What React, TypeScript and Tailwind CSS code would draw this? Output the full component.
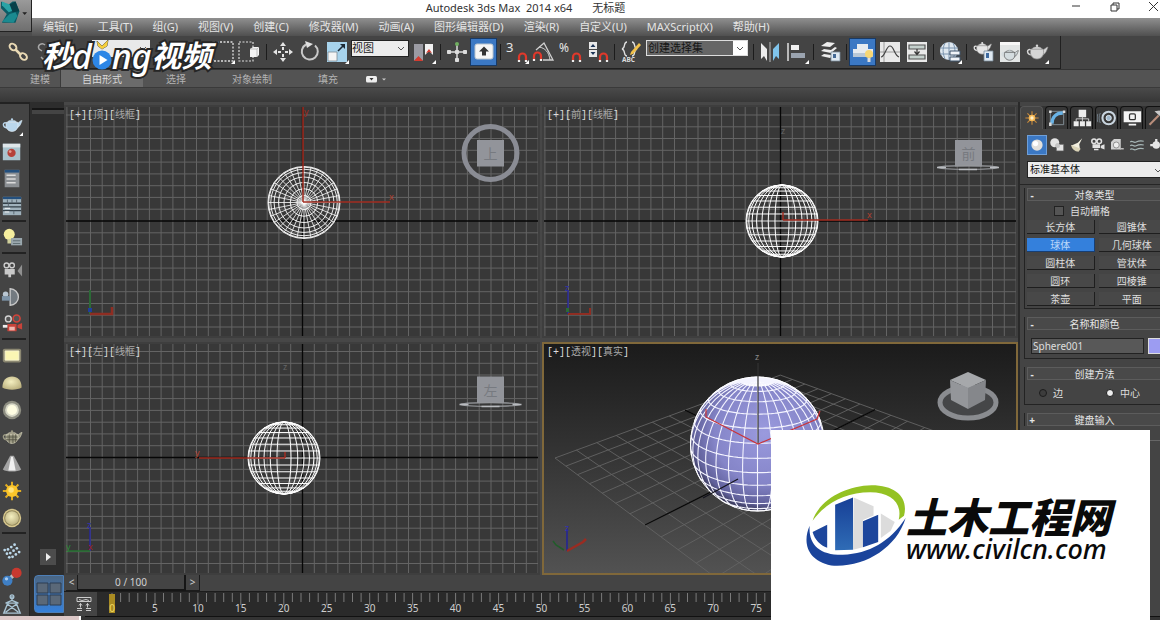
import React from "react";

const UI = "font-['Noto_Sans','Noto_Sans_CJK_SC',sans-serif]";

const magnet = (
  <path d="M14 21v-4a3.500 3.500 0 0 1 7 0v4" fill="none" stroke="#e0392b" strokeWidth="2.200" />
);
const magnetTips = <path d="M12.900 20h2.200v2h-2.200zM19.900 20h2.200v2h-2.200z" fill="#eee" />;
const corner = <path d="M24 20v4h-4z" fill="#fff" />;

const teapot = (fill: string, edge: string) => (
  <g>
    <path d="M17.500 10c3-1 3.500-3 5.500-3-1 2.500-2 7-5.500 8z" fill={fill} stroke={edge} strokeWidth=".6" />
    <path d="M6 10C1.500 8 1 14.500 7 15" fill="none" stroke={fill} strokeWidth="1.500" />
    <path d="M6 9h12c2 5-1 10-6 10S4 14 6 9z" fill={fill} stroke={edge} strokeWidth=".7" />
    <path d="M7 9c1-3 9-3 10 0z" fill={fill} stroke={edge} strokeWidth=".5" />
    <circle cx="12" cy="5.800" r="1.200" fill={fill} />
  </g>
);

const icons: Record<string, React.ReactNode> = {
  link: (
    <g fill="none" stroke="#e9d9b4" strokeWidth="2">
      <ellipse cx="7" cy="7" rx="3.800" ry="2.800" transform="rotate(40 7 7)" />
      <path d="M9 9l6 6" strokeWidth="2.500" />
      <ellipse cx="17.500" cy="16.500" rx="3.800" ry="2.800" transform="rotate(40 17.500 16.500)" />
    </g>
  ),
  unlink: (
    <g fill="none" stroke="#a8a8a8" strokeWidth="1.500">
      <path d="M12 5c-3-3-8 0-6 4l3 2" />
      <path d="M8 17l3 3M12 14l3 1" />
    </g>
  ),
  pick: <path d="M7 3v16l4-4 3 6 2-1-3-6h6z" fill="#ddd" />,
  list: <path d="M5 6h14M5 10h14M5 14h14M5 18h14" stroke="#ddd" strokeWidth="1.500" />,
  region: (
    <g>
      <path d="M2 2h20v19H2z" fill="none" stroke="#ddd" strokeWidth="1.300" strokeDasharray="2 1.500" />
      {corner}
    </g>
  ),
  crossing: (
    <g>
      <path d="M1 2h14v19H1z" fill="none" stroke="#ddd" strokeWidth="1.200" strokeDasharray="2 1.500" />
      <path d="M12 9l3-2h6v8l-2 2h-7z" fill="#f4f4f4" />
      <path d="M12 9h7v8M19 9l2-2" fill="none" stroke="#aaa" strokeWidth=".7" />
    </g>
  ),
  move: (
    <g fill="#e4e4e4">
      <path d="M12 2l3 4H9zM12 22l3-4H9zM2 12l4-3v6zM22 12l-4-3v6z" />
      <path d="M11 7h2v3h-2zM11 14h2v3h-2zM7 11h3v2H7zM14 11h3v2h-3z" />
    </g>
  ),
  rotate: (
    <g>
      <path d="M17 5.500A8 8 0 1 1 8 4.500" fill="none" stroke="#c9c9c9" strokeWidth="2" />
      <path d="M7 1l8 3-6 4z" fill="#e0e0e0" />
    </g>
  ),
  scale: (
    <g>
      <path d="M2 2h20v20H2z" fill="#a7d3ec" />
      <path d="M3 12h9v9H3z" fill="#f4f4f4" stroke="#7c8a94" strokeWidth=".8" />
      <path d="M13 11l5-5" stroke="#1b2a36" strokeWidth="1.600" />
      <path d="M15 4h5v5z" fill="#1b2a36" />
      {corner}
    </g>
  ),
  pivot: (
    <g>
      <path d="M2 4h9v17l-4.500-4L2 21z" fill="#9b9ba3" />
      <path d="M2 21l4.500-5 4.500 5z" fill="#d63b2f" />
      <path d="M13 4h8v11l-4-4-4 4z" fill="#f2f2f2" />
      <path d="M14 13l3-4 3 4-3-1z" fill="#d63b2f" />
      {corner}
    </g>
  ),
  manip: (
    <g stroke="#ddd" fill="#ddd">
      <path d="M12 5v15M4 12h16" strokeWidth="1.500" />
      <path d="M10.500 10.500h3v3h-3zM10.500 18.500h3v3h-3zM2.500 10.500h3v3h-3zM18.500 10.500h3v3h-3z" />
      <circle cx="12" cy="4" r="2" fill="#6fae5f" stroke="none" />
    </g>
  ),
  keyboard: (
    <g>
      <rect x="3" y="4" width="18" height="15" rx="2" fill="#f5f5f5" stroke="#b9c4ce" />
      <path d="M12 6.500l5 5h-3v4h-4v-4H7z" fill="#333" />
    </g>
  ),
  snap: (
    <g>
      <text x="1" y="12" fontSize="13" fill="#e6e6e6" fontFamily="Noto Sans">3</text>
      {magnet}
      {magnetTips}
      {corner}
    </g>
  ),
  angle: (
    <g>
      <path d="M4 10L12 3l9 17H11" fill="none" stroke="#d0d0d0" strokeWidth="1.300" />
      <path d="M7 7c6 1 10 5 11 13" fill="none" stroke="#d0d0d0" />
      <g transform="translate(-12 -1)">{magnet}{magnetTips}</g>
    </g>
  ),
  percent: (
    <g>
      <text x="0" y="12" fontSize="12" fill="#e6e6e6" fontFamily="Noto Sans">%</text>
      {magnet}
      {magnetTips}
    </g>
  ),
  spinner: (
    <g>
      <path d="M3 2h8v7H3zM3 10h8v7H3z" fill="#e8e8e8" />
      <path d="M7 4l2.500 3h-5zM7 15l2.500-3h-5z" fill="#1d3557" />
      {magnet}
      {magnetTips}
    </g>
  ),
  named: (
    <g>
      <path d="M8 2C4 2 7 8 3 9c4 1 1 7 5 7M13 2c4 0 1 6 5 7-4 1-1 7-5 7" fill="none" stroke="#e0e0e0" strokeWidth="1.300" />
      <path d="M20 3l2 2-8 9-3 1 1-3z" fill="#f2c14a" />
      <text x="3" y="22" fontSize="6.500" fontWeight="700" fill="#ddd" fontFamily="Noto Sans">ABC</text>
    </g>
  ),
  mirror: (
    <g>
      <path d="M3 3l6 6v12l-3-5-3 3z" fill="#ececec" />
      <path d="M12 2v20" stroke="#bbb" />
      <path d="M21 3l-6 6v12l3-5 3 3z" fill="#7fc4ec" />
    </g>
  ),
  align: (
    <g>
      <path d="M3 3v18" stroke="#e0e0e0" strokeWidth="1.500" />
      <path d="M6 5h8v5H6z" fill="#f0f0f0" />
      <path d="M6 13h14v5H6z" fill="#9ba4b0" />
      {corner}
    </g>
  ),
  layers: (
    <g>
      <path d="M3 6l6-4 8 1-5 4zM3 11l3-2 7 1 4-3 2 1-6 5zM3 16l3-2 7 1 4-3 1 1-6 5z" fill="#eee" />
      <path d="M13 12h9v9h-9z" fill="#dfe9f2" stroke="#7a8a99" strokeWidth=".8" />
      <path d="M15 14h3v4h-3z" fill="#456a96" />
    </g>
  ),
  ribbon: (
    <g>
      <path d="M2 9h20v8H2zM6 4h11v5H6z" fill="#e6ebf0" />
      <path d="M2 13h20v4H2z" fill="#b9c8d6" />
      <circle cx="18" cy="14" r="4" fill="#f7d774" />
      <path d="M16.500 18h3v4h-3z" fill="#ddd" />
    </g>
  ),
  curve: (
    <g>
      <path d="M2 2h20v20H2z" fill="#e9e9e9" />
      <path d="M2 12h20M6 2v20" stroke="#888" strokeWidth=".8" />
      <path d="M3 17c4 0 5-11 9-11s4 9 9 11" fill="none" stroke="#444" strokeWidth="1.200" />
    </g>
  ),
  schematic: (
    <g>
      <path d="M2 2h20v20H2z" fill="#e9e9e9" />
      <path d="M4 5h16v4H4zM4 15h16v4H4z" fill="#c4d0cc" stroke="#555" strokeWidth="1.200" />
      <path d="M12 9v5M9.500 11.500l2.500 3 2.500-3" fill="none" stroke="#333" strokeWidth="1.200" />
    </g>
  ),
  material: (
    <g>
      <circle cx="11" cy="11" r="9" fill="#dfe8f0" />
      <path d="M2 8h18M2 14h18M7 3c-3 6-2 11 0 16M15 3c3 6 2 11 0 16M11 2v18" fill="none" stroke="#7a93ad" />
      <path d="M12 11h10v4H12zM12 17h10v4H12z" fill="#f0f4f8" stroke="#3e556c" />
      {corner}
    </g>
  ),
  renderSetup: (
    <g>
      <g transform="translate(1 -2) scale(.85)">{teapot("#e6e6e6", "#888")}</g>
      <path d="M13 11h9v10h-9z" fill="#dfe9f2" stroke="#7a8a99" strokeWidth=".8" />
      <path d="M15 13h3v5h-3z" fill="#3e6aa0" />
    </g>
  ),
  renderFrame: (
    <g>
      <path d="M2 2h20v20H2z" fill="#e2e5e5" />
      <path d="M2 2h20v3H2z" fill="#f8f8f8" />
      <g transform="translate(2 5) scale(.8)">{teapot("#d4dcdf", "#333")}</g>
    </g>
  ),
  render: (
    <g>
      {teapot("#d6d6d6", "#8b8b8b")}
      {corner}
    </g>
  ),
  teapotBlue: (
    <g>
      {teapot("#b9d6ec", "#e4f0f8")}
      {corner}
    </g>
  ),
  preview: (
    <g>
      <path d="M2 3h19v18H2z" fill="#a9c3cd" />
      <path d="M2 3h19v4H2z" fill="#dfe6ea" />
      <circle cx="11.500" cy="13" r="4.500" fill="#b5423a" />
      <circle cx="10" cy="11.500" r="1.500" fill="#e39a90" />
    </g>
  ),
  script: (
    <g>
      <path d="M4 2h16v19H4z" fill="#8b8f93" />
      <path d="M4 2h16v3H4z" fill="#24507e" />
      <path d="M6 8h10M6 12h10M6 16h10" stroke="#dcdcdc" strokeWidth="1.600" />
    </g>
  ),
  table: (
    <g>
      <path d="M2 2h20v20H2z" fill="#9fb1bb" />
      <path d="M2 2h20v2.500H2z" fill="#24507e" />
      <path d="M2 9h20M2 13h20M2 17h20" stroke="#333f47" strokeWidth="1.500" />
      <path d="M7 5v4M12 5v4M17 5v4M8 9v4M14 17v4" stroke="#56646d" />
      <path d="M4 14.500h6M4 18.500h5" stroke="#fff" />
    </g>
  ),
  bulb: (
    <g>
      <circle cx="9" cy="8" r="6" fill="#f5ee9e" />
      <path d="M7 13h4v5H7z" fill="#cfcf9c" />
      <path d="M11 12h12v8H11z" fill="#9aa7ad" />
      <path d="M13 15h8M13 18h8" stroke="#5d6a70" />
    </g>
  ),
  camera: (
    <g fill="#c9c9c9">
      <circle cx="6" cy="7" r="2.600" fill="none" stroke="#ccc" strokeWidth="1.500" />
      <circle cx="12" cy="7" r="2.600" fill="none" stroke="#ccc" strokeWidth="1.500" />
      <path d="M4 11h11v6H4zM8 17h3v3H8z" />
      <path d="M23 6v13l-5-6z" fill="#909090" />
    </g>
  ),
  dome: (
    <g>
      <path d="M10 3a9 9 0 0 1 0 18z" fill="#737a80" stroke="#c9c9c9" strokeWidth="1.500" />
      <circle cx="5" cy="9" r="3" fill="#b9c6d2" />
      <path d="M1 11h9v5H1z" fill="#7d93a7" />
    </g>
  ),
  cameraRed: (
    <g>
      <circle cx="8" cy="6.500" r="3.200" fill="#555" stroke="#d3d3d3" strokeWidth="1.500" />
      <circle cx="17" cy="6" r="3.800" fill="#555" stroke="#d0443a" strokeWidth="1.800" />
      <path d="M7 12h10v8H7zM18 13l5-2v7l-5-2z" fill="#c8433a" />
      <path d="M2 13h5v3H2z" fill="#eee" />
      <path d="M9 15h6v4H9z" fill="#efb7b0" />
    </g>
  ),
  rectLight: (
    <g>
      <rect x="2" y="4" width="20" height="15" rx="2" fill="#8c8872" />
      <path d="M4.500 6.500h15v10h-15z" fill="#fbf6b4" stroke="#f8f4d0" />
    </g>
  ),
  domeLight: <path d="M1.500 17C1.500 9 6 5 12 5s10.500 4 10.500 12c-4 3-17 3-21 0z" fill="url(#cream)" />,
  ringLight: (
    <g>
      <circle cx="12" cy="12" r="10" fill="#8e8e82" />
      <circle cx="12" cy="12" r="7.500" fill="#d9d9c8" />
      <circle cx="12" cy="12" r="5.500" fill="#fffde2" />
    </g>
  ),
  teapotOlive: (
    <g>
      {teapot("#9b9983", "#e4e1c8")}
      <path d="M9 9v10M13 9v10M16 9v9M5 12h13M5 15h13" stroke="#4c4a3c" strokeWidth=".8" />
    </g>
  ),
  cone: (
    <g>
      <path d="M10 3h4l8 15c-4 3-16 3-20 0z" fill="#a4a4a4" />
      <path d="M11 4h2l3 15H8z" fill="#f1f1f1" />
    </g>
  ),
  sun: (
    <g>
      <path d="M12 2v20M2 12h20M5 5l14 14M19 5L5 19" stroke="#e2ad23" strokeWidth="2.200" />
      <circle cx="12" cy="12" r="6.500" fill="#fbc52a" />
      <circle cx="11" cy="11" r="3" fill="#ffe27a" />
    </g>
  ),
  sphereLight: (
    <g>
      <circle cx="12" cy="12" r="10" fill="#d8c88e" />
      <circle cx="12" cy="12" r="8.500" fill="#8f855a" />
      <circle cx="12" cy="12" r="7.500" fill="url(#cream)" />
    </g>
  ),
  scatter: (
    <g fill="#bcd8ea">
      {[0, 1, 2].map((r) =>
        [0, 1, 2, 3].map((c) => (
          <circle key={`${r}-${c}`} cx={4 + c * 3.600 + r * 2.500} cy={14 - c * 2.600 + r * 4 - (c === 0 ? 2 : 0)} r="1.500" />
        ))
      )}
    </g>
  ),
  atoms: (
    <g>
      <path d="M8 15l8-7" stroke="#bbb" strokeWidth="4" />
      <circle cx="7" cy="16" r="5.500" fill="#3f7fc4" />
      <circle cx="17" cy="7.500" r="5.500" fill="#c8392f" />
      <circle cx="6" cy="14" r="1.800" fill="#a9cdf0" />
    </g>
  ),
  rig: (
    <g fill="none" stroke="#a9c4d4" strokeWidth="1.500">
      <path d="M12 3v5l-7 3h14l-7-3M7 12L3 22h18l-4-10M7 12l12 9M17 12L5 21" />
      <circle cx="12" cy="4" r="2" />
    </g>
  ),
  create: (
    <g>
      <path d="M12 4v16M4 12h16M6.500 6.500l11 11M17.500 6.500l-11 11" stroke="#c98a3a" strokeWidth="1.300" />
      <circle cx="12" cy="12" r="4" fill="#f7b955" />
      <circle cx="12" cy="12" r="2" fill="#fff1c9" />
    </g>
  ),
  modify: (
    <g>
      <path d="M4 4h16v16H4z" fill="none" stroke="#8d9aa4" />
      <path d="M6 19C6 11 11 6 19 6" fill="none" stroke="#69b3e6" strokeWidth="4" />
      <path d="M2.500 17.500h3v4h-3zM2.500 3h3v3h-3zM19 3h3v3h-3z" fill="#ddd" />
    </g>
  ),
  hierarchy: (
    <g fill="#ececec">
      <path d="M8 2h9v9H8zM2 16h6v6H2zM9.500 16h6v6h-6zM17 16h6v6h-6z" />
      <path d="M12.500 10v6M5 16v-3h15v3" fill="none" stroke="#ddd" />
    </g>
  ),
  motion: (
    <g fill="none">
      <circle cx="14" cy="12" r="7.500" stroke="#c9d5df" strokeWidth="2.500" />
      <circle cx="14" cy="12" r="3.200" fill="#9fb7cb" stroke="#e5eef5" />
      <path d="M4 6c-2 4-2 8 0 12M1 7c-1 4-1 6 0 10" stroke="#7b8a96" />
    </g>
  ),
  display: (
    <g>
      <path d="M2 4h21v13H2zM8 19h9v2H8z" fill="#f4f4f4" />
      <rect x="9" y="7" width="7" height="7" rx="1.500" fill="none" stroke="#333" strokeWidth="1.500" />
    </g>
  ),
  utilities: (
    <g>
      <path d="M3 20L14 9" stroke="#b98e7b" strokeWidth="2.500" />
      <path d="M9 4l6-1 7 7-3 3z" fill="#c9c9c9" />
    </g>
  ),
  geometry: (
    <g>
      <circle cx="12" cy="12" r="7.500" fill="#e2e0dc" />
      <circle cx="10" cy="10" r="3.500" fill="#fff" />
    </g>
  ),
  shapes: (
    <g>
      <circle cx="9" cy="9" r="6" fill="#e4e4e4" />
      <path d="M11 11h10v9H11z" fill="#e4e4e4" stroke="#555" />
      <circle cx="13" cy="13" r="3" fill="#c4c4c4" />
    </g>
  ),
  lights: (
    <g>
      <path d="M19 3l-4 8 1 7L4 13l9-4z" fill="#f2efdf" />
      <path d="M4 12l13 5-3 4c-5 0-9-4-10-9z" fill="#dad3b7" />
    </g>
  ),
  cameras: (
    <g fill="#e2e2e2">
      <circle cx="8" cy="7" r="3" fill="none" stroke="#e2e2e2" strokeWidth="2" />
      <circle cx="15" cy="7" r="3" fill="none" stroke="#e2e2e2" strokeWidth="2" />
      <path d="M6 11h10v5H6zM17 13l5-2v7l-5-2zM8 17h6v2H8z" />
    </g>
  ),
  helpers: (
    <g>
      <path d="M4 8l4-4h9v14H4z" fill="#d2d2d2" />
      <circle cx="11" cy="12" r="4" fill="#eee" stroke="#777" />
      <path d="M16 17h5" stroke="#bbb" strokeWidth="2" />
    </g>
  ),
  waves: (
    <path d="M3 8c3-3 4 2 8 0s5-2 10-1M3 13c3-3 4 2 8 0s5-2 10-1M3 18c3-3 4 2 8 0s5-2 10-1" fill="none" stroke="#a8b8b8" strokeWidth="1.600" />
  ),
  systems: (
    <g>
      <circle cx="11" cy="12" r="5" fill="#e6e6e6" />
      <path d="M11 4v4M3 12h4" stroke="#e6e6e6" strokeWidth="3" />
    </g>
  ),
};

function Icon({ name, className = "h-6 w-6" }: { name: string; className?: string }) {
  return (
    <svg viewBox="0 0 24 24" className={`${className} shrink-0`} aria-hidden="true">
      <defs>
        <radialGradient id="cream" cx=".45" cy=".4" r=".7">
          <stop offset="0" stopColor="#f4efc0" />
          <stop offset="1" stopColor="#b5aa78" />
        </radialGradient>
      </defs>
      {icons[name]}
    </svg>
  );
}

function Tool({ name, on }: { name: string; on?: boolean }) {
  return (
    <button
      type="button"
      aria-label={name}
      className={`flex h-7 w-[27px] shrink-0 items-center justify-center ${on ? "border border-[#183a66] bg-[#3b78c4]" : ""}`}
    >
      <Icon name={name} className="h-6 w-6" />
    </button>
  );
}

const Sep = () => (
  <div className="flex w-1.5 shrink-0 justify-center">
    <div className="h-4 w-px bg-[#1c1c1c]" />
  </div>
);

const Chevron = ({ color }: { color: string }) => (
  <svg viewBox="0 0 14 14" className="h-3.5 w-3.5 shrink-0" aria-hidden="true">
    <path d="M4 6l3 3 3-3" fill="none" stroke={color} />
  </svg>
);

function TitleAndMenu() {
  const menus = ["编辑(E)", "工具(T)", "组(G)", "视图(V)", "创建(C)", "修改器(M)", "动画(A)", "图形编辑器(D)", "渲染(R)", "自定义(U)", "MAXScript(X)", "帮助(H)"];
  return (
    <header className="flex h-9 shrink-0 bg-[#4c4c4c]">
      <button type="button" aria-label="Application" className="flex h-8 w-8 shrink-0 items-start justify-center border-b border-r border-[#222] bg-gradient-to-b from-[#9a9a9a] to-[#6f6f6f]">
        <svg viewBox="0 0 32 32" className="h-8 w-8" aria-hidden="true">
          <path d="M1 1l7 4 5-4h3l4 10-4 12H2l5-9-6-6z" fill="#0b5c66" />
          <path d="M2 1l8 3 4 6-5 2-7-7z" fill="#29a3a6" />
          <path d="M2 22l8-8 6-2 2 4-4 7z" fill="#1b8a90" />
          <path d="M10 4l6-3 4 10-7 1z" fill="#074049" />
          <path d="M23 12h5l-2.500 3z" fill="#222" />
        </svg>
      </button>
      <div className="flex min-w-0 flex-1 flex-col">
        <div className="flex h-[18px] items-center overflow-hidden bg-white text-[11px] leading-4 text-[#333]">
          <div className="flex flex-1 justify-center gap-5 whitespace-pre pb-0.5 pr-9">
            <span>Autodesk 3ds Max  2014 x64</span>
            <span>无标题</span>
          </div>
          <div className="-mr-3 flex">
            {["M7 10h8", "M7 9h6v6H7zM9 9V7h6v6h-2", "M6 6l9 9M15 6l-9 9"].map((d, i) => (
              <button key={d} type="button" aria-label={["Minimize", "Restore", "Close"][i]} className="flex w-[39px] justify-center">
                <svg viewBox="2 5 16 16" className="h-4 w-4" aria-hidden="true">
                  <path d={d} fill="none" stroke="#333" />
                </svg>
              </button>
            ))}
          </div>
        </div>
        <nav className="flex h-[18px] items-center gap-5 overflow-hidden bg-gradient-to-b from-[#909090] to-[#505050] pl-[11px] text-[11px] leading-4 text-[#e4e4e4]">
          {menus.map((m) => (
            <button key={m} type="button" className="shrink-0 whitespace-nowrap">{m}</button>
          ))}
        </nav>
      </div>
    </header>
  );
}

function Toolbar() {
  return (
    <div className="flex h-[33px] shrink-0 overflow-hidden bg-[#444]">
      <div className="flex items-center border-b border-r border-[#202020] pl-1 pr-2.5">
        <Tool name="link" />
        <Tool name="unlink" />
        <label className="mb-2 ml-[34px] flex h-[17px] w-[58px] items-center bg-[#e9e9e9] text-[11px] leading-4 text-[#222]">
          <select aria-label="选择过滤器" className="min-w-0 flex-1 appearance-none bg-transparent pl-1">
            <option aria-label="全部"> </option>
          </select>
          <Chevron color="#555" />
        </label>
        <div className="flex pl-1 pr-px">
          <Tool name="pick" />
          <Tool name="list" />
        </div>
        <Tool name="region" />
        <Tool name="crossing" />
        <Sep />
        <Tool name="move" />
        <Tool name="rotate" />
        <Tool name="scale" />
        <label className="mx-px mb-2 flex h-[17px] w-[58px] shrink-0 items-center border border-[#222] bg-[#ececec] text-[11px] leading-4 text-[#222]">
          <select aria-label="参考坐标系" className="min-w-0 flex-1 appearance-none bg-transparent">
            <option>视图</option>
          </select>
          <Chevron color="#555" />
        </label>
        <Tool name="pivot" />
        <Sep />
        <Tool name="manip" />
        <Tool name="keyboard" on />
        <Sep />
        <Tool name="snap" />
        <Tool name="angle" />
        <Tool name="percent" />
        <Tool name="spinner" />
        <Sep />
        <Tool name="named" />
        <label className="mx-0.5 mb-2 flex h-4 w-[102px] shrink-0 items-center border border-[#ddd] bg-white text-[11px] leading-[14px] text-[#151515]">
          <select aria-label="命名选择集" className="min-w-0 flex-1 appearance-none bg-[#666] pl-px">
            <option>创建选择集</option>
          </select>
          <Chevron color="#555" />
        </label>
        <Sep />
        <Tool name="mirror" />
        <Tool name="align" />
        <Sep />
        <Tool name="layers" />
        <Sep />
        <Tool name="ribbon" on />
        <Tool name="curve" />
        <Tool name="schematic" />
        <Sep />
        <Tool name="material" />
        <Sep />
        <Tool name="renderSetup" />
        <Tool name="renderFrame" />
        <Tool name="render" />
      </div>
    </div>
  );
}

function Ribbon() {
  const tab = "shrink-0 px-[23px] text-center";
  return (
    <div className="shrink-0">
      <div className="flex h-[18px] items-stretch border-t border-[#333] bg-[#535353] text-[10px] leading-[18px] text-[#b4b4b4]">
        <button type="button" className="shrink-0 border-r border-[#3a3a3a] pl-[30px] pr-[10px]">建模</button>
        <button type="button" className="shrink-0 bg-[#6b6b6b] px-[21px] text-[#d8d8d8]">自由形式</button>
        <button type="button" className={tab}>选择</button>
        <button type="button" className={tab}>对象绘制</button>
        <button type="button" className={tab}>填充</button>
        <button type="button" aria-label="最小化" className="ml-1 flex items-center">
          <svg viewBox="0 0 22 10" className="h-2.5 w-[22px]" aria-hidden="true">
            <rect x="1" y="2" width="11" height="6.500" rx="1.500" fill="#eee" />
            <path d="M4.500 4h4l-2 2.500z" fill="#333" />
            <path d="M17 4.500h4l-2 2z" fill="#ccc" />
          </svg>
        </button>
      </div>
      <div className="h-[15px] border-t border-[#3a3a3a] bg-gradient-to-b from-[#4a4a4a] to-[#373737]" />
    </div>
  );
}

function LeftTools() {
  const groups = [
    ["teapotBlue", "preview", "script", "table"],
    ["bulb"],
    ["camera", "dome", "cameraRed"],
    ["rectLight", "domeLight", "ringLight", "teapotOlive", "cone", "sun", "sphereLight"],
    ["scatter", "atoms", "rig"],
  ];
  return (
    <aside className="flex w-[30px] shrink-0 flex-col overflow-hidden border-r border-t-2 border-[#222] bg-[#444] pt-[7px]">
      {groups.map((g, i) => (
        <div key={g[0]} className={`flex flex-col ${i ? "pt-[5px]" : ""}`}>
          {i > 0 && <div className="-mt-1 mb-0.5 ml-0.5 h-0.5 w-6 shrink-0 bg-[#222]" />}
          {g.map((n) => (
            <button key={n} type="button" aria-label={n} className="flex h-[27px] w-6 shrink-0 items-center justify-center">
              <Icon name={n} className="h-[22px] w-[22px]" />
            </button>
          ))}
        </div>
      ))}
    </aside>
  );
}

function LayoutStrip() {
  return (
    <div className="flex w-[34px] shrink-0 flex-col items-end bg-[#2d2d2d]">
      <div className="mt-1.5 h-1.5 w-8 border-t-2 border-[#161616] bg-[#444]" />
      <div className="flex-1" />
      <button type="button" aria-label="播放" className="mb-2.5 mr-2 flex h-4 w-4 items-center justify-center bg-[#4c4c4c]">
        <svg viewBox="0 0 8 8" className="h-2 w-2" aria-hidden="true"><path d="M2 0l5 4-5 4z" fill="#eee" /></svg>
      </button>
      <button type="button" aria-label="视口布局" className="mb-[3px] flex h-[38px] w-[30px] items-center justify-center rounded-l border border-[#4d7fb8] bg-gradient-to-b from-[#4a6684] to-[#3580da]">
        <svg viewBox="0 0 28 28" className="h-7 w-7" aria-hidden="true">
          <path d="M2 3h11v10H2zM15 3h11v10H15zM2 15h11v10H2zM15 15h11v10H15z" fill="#5a6878" stroke="#2c3d50" />
        </svg>
      </button>
    </div>
  );
}

const STEP = 11.780;
function Grid({ x, y, cx, cy }: { x: number; y: number; cx: number; cy: number }) {
  const n = Array.from({ length: 61 }, (_, i) => i - 30).filter((i) => i !== 0);
  return (
    <g>
      <path
        d={n.map((i) => `M${(cx + i * STEP).toFixed(1)} ${y - 300}v900`).join("") + n.map((i) => `M${x - 400} ${(cy + i * STEP).toFixed(1)}h1400`).join("")}
        stroke="#646464"
        strokeWidth="1"
        fill="none"
      />
      <path d={`M${cx} ${y - 300}v900M${x - 400} ${cy}h1400`} stroke="#060606" strokeWidth="1.300" />
    </g>
  );
}

const R = 36;
function WireTop({ cx, cy }: { cx: number; cy: number }) {
  const rays = Array.from({ length: 32 }, (_, i) => (i * Math.PI) / 16);
  return (
    <g fill="none" stroke="#fff" strokeWidth=".9">
      {[1, 2, 3, 4, 5, 6, 7, 8].map((k) => (
        <circle key={k} cx={cx} cy={cy} r={R * Math.sin((k * Math.PI) / 16)} />
      ))}
      <path d={rays.map((a) => `M${cx} ${cy}L${cx + R * Math.cos(a)} ${cy + R * Math.sin(a)}`).join("")} strokeWidth=".8" />
    </g>
  );
}
function WireSide({ cx, cy }: { cx: number; cy: number }) {
  const lats = Array.from({ length: 15 }, (_, i) => ((i + 1) * Math.PI) / 16);
  return (
    <g fill="none" stroke="#fff" strokeWidth="1">
      {[0, 1, 2, 3, 4, 5, 6, 7, 8].map((k) => (
        <ellipse key={k} cx={cx} cy={cy} rx={R * Math.sin((k * Math.PI) / 16)} ry={R} />
      ))}
      <path d={lats.map((a) => `M${cx - R * Math.sin(a)} ${cy - R * Math.cos(a)}h${2 * R * Math.sin(a)}`).join("")} />
    </g>
  );
}

function spherePath(cx: number, cy: number, r: number) {
  const e = (22 * Math.PI) / 180;
  const D = 7;
  const k = (r * Math.sqrt(D * D - 1)) / D;
  const project = (lat: number, lon: number) => {
    const X = Math.cos(lat) * Math.sin(lon);
    const Y = Math.sin(lat);
    const Z = Math.cos(lat) * Math.cos(lon);
    const y = Y * Math.cos(e) - Z * Math.sin(e);
    const z = Y * Math.sin(e) + Z * Math.cos(e);
    const s = D / (D - z);
    return { x: cx + k * X * s, y: cy - k * y * s, ok: z > 1 / D };
  };
  let d = "";
  const trace = (f: (t: number) => { x: number; y: number; ok: boolean }) => {
    let pen = false;
    for (let i = 0; i <= 96; i++) {
      const p = f(i / 96);
      if (p.ok) d += `${pen ? "L" : "M"}${p.x.toFixed(1)} ${p.y.toFixed(1)}`;
      pen = p.ok;
    }
  };
  for (let i = -7; i <= 7; i++) trace((t) => project((i * Math.PI) / 16, t * 2 * Math.PI));
  for (let j = 0; j < 32; j++) trace((t) => project((t - 0.5) * Math.PI, (j * Math.PI) / 16));
  return d;
}

function floorPoint(u: number, v: number) {
  const w = 1 + 0.368 * u - 0.345 * v;
  return `${((555 + 512.4 * u - 42.5 * v) / w).toFixed(1)} ${((458 + 55.2 * u - 47.1 * v) / w).toFixed(1)}`;
}

const Cube = ({ x, y, label }: { x: number; y: number; label: string }) => (
  <g>
    <rect x={x} y={y} width="27" height="26.500" fill="#92949a" />
    <text x={x + 13.500} y={y + 19} fontSize="14" textAnchor="middle" fill="#777a80" fontFamily="Noto Sans CJK SC">{label}</text>
  </g>
);
const Disc = ({ cx, cy }: { cx: number; cy: number }) => (
  <g>
    <ellipse cx={cx} cy={cy} rx="30" ry="1.800" fill="none" stroke="#96989c" strokeWidth="1.200" />
    <path d={`M${cx - 31} ${cy}h9M${cx + 22} ${cy}h9M${cx - 9} ${cy + 2}h18`} stroke="#b9bbbf" strokeWidth="1.500" />
  </g>
);

function Viewport({ box, tags, active, children }: { box: string; tags: string[]; active?: boolean; children: React.ReactNode }) {
  return (
    <section className={`relative min-h-0 min-w-0 border-2 ${active ? "border-[#80683a] bg-gradient-to-b from-[#1b1b1b] to-[#525252]" : "border-[#3e3e3e] bg-[#383838]"}`}>
      <svg viewBox={box} preserveAspectRatio="xMidYMid slice" className="block h-full w-full" aria-hidden="true">{children}</svg>
      <div className="absolute left-[3px] top-px font-['Liberation_Mono','Noto_Sans_CJK_SC',monospace] text-[10px] leading-4 text-[#dcdcdc]">
        [+]
        {tags.map((t) => (
          <span key={t}>[<span className="text-[#a8a8a8]">{t}</span>]</span>
        ))}
      </div>
    </section>
  );
}

const Letter = ({ x, y, c, children }: { x: number; y: number; c: string; children: string }) => (
  <text x={x} y={y} fontSize="9" fill={c} fontFamily="Noto Sans">{children}</text>
);

function Viewports() {
  const cells = Array.from({ length: 15 }, (_, i) => i);
  return (
    <div className="grid min-h-0 flex-1 grid-cols-2 grid-rows-2 gap-x-0.5 gap-y-1">
      <Viewport box="66 107 472 229" tags={["顶", "线框"]}>
        <Grid x={66} y={107} cx={302.5} cy={221} />
        <WireTop cx={304} cy={202.5} />
        <path d="M303 202V107M303 202h87" stroke="#a12c20" strokeWidth="1.500" fill="none" />
        <Letter x={389} y={200} c="#b5402f">x</Letter>
        <Letter x={304} y={115} c="#a12c20">y</Letter>
        <circle cx="490.500" cy="153" r="26.500" fill="none" stroke="#8a8c94" strokeWidth="5" />
        <Cube x={477} y={140} label="上" />
        <path d="M90 314v-24" stroke="#2b6a36" strokeWidth="2" />
        <path d="M90 314h22v-7" stroke="#8f2d22" strokeWidth="2.500" fill="none" />
        <path d="M88 308h4v4h-4z" fill="#1f3e9c" />
      </Viewport>
      <Viewport box="544 107 472 229" tags={["前", "线框"]}>
        <Grid x={544} y={107} cx={780.5} cy={221} />
        <WireSide cx={782} cy={221} />
        <path d="M783 220h85M783 220v-8" stroke="#a12c20" strokeWidth="1.500" fill="none" />
        <Letter x={867} y={218} c="#b5402f">x</Letter>
        <Letter x={781} y={134} c="#666">z</Letter>
        <Cube x={955} y={140} label="前" />
        <Disc cx={968} cy={167.5} />
        <path d="M568 314v-24" stroke="#27279a" strokeWidth="1.500" />
        <path d="M568 314h22v-6" stroke="#8f2d22" strokeWidth="2" fill="none" />
        <Letter x={565} y={291} c="#3030b0">z</Letter>
        <path d="M566 308h3v4h-3z" fill="#2b6a36" />
      </Viewport>
      <Viewport box="66 344 472 229" tags={["左", "线框"]}>
        <Grid x={66} y={344} cx={302.5} cy={457.5} />
        <WireSide cx={284} cy={458} />
        <path d="M285 458h-86M285 458v-6" stroke="#a12c20" strokeWidth="1.500" fill="none" />
        <Letter x={195} y={456} c="#b5402f">y</Letter>
        <Letter x={283} y={370} c="#666">z</Letter>
        <Cube x={477} y={376.5} label="左" />
        <Disc cx={490.5} cy={404.5} />
        <path d="M90 551v-24" stroke="#27279a" strokeWidth="1.500" />
        <path d="M90 551H68" stroke="#23702f" strokeWidth="1.500" />
        <Letter x={87} y={528} c="#3030b0">z</Letter>
        <Letter x={66} y={550} c="#2b8a38">y</Letter>
        <Letter x={88} y={550} c="#a02020">x</Letter>
      </Viewport>
      <Viewport box="544 344 472 229" tags={["透视", "真实"]} active>
        <defs>
          <radialGradient id="ball" cx=".55" cy=".42" r=".62">
            <stop offset="0" stopColor="#9a9ade" />
            <stop offset=".6" stopColor="#8585c8" />
            <stop offset=".85" stopColor="#60609a" />
            <stop offset="1" stopColor="#20202e" />
          </radialGradient>
        </defs>
        <path
          d={cells.map((i) => `M${floorPoint(i / 14, 0)}L${floorPoint(i / 14, 1)}M${floorPoint(0, i / 14)}L${floorPoint(1, i / 14)}`).join("")}
          stroke="#636363"
          strokeWidth=".9"
          fill="none"
        />
        <path d={`M${floorPoint(0.5, 0)}L${floorPoint(0.5, 1)}M${floorPoint(0, 0.5)}L${floorPoint(1, 0.5)}`} stroke="#080808" strokeWidth="1.300" />
        <circle cx="757.500" cy="444" r="67" fill="url(#ball)" />
        <ellipse cx="757.500" cy="382" rx="17" ry="4.500" fill="#fff" />
        <path d={spherePath(757.5, 444, 67)} fill="none" stroke="#f4f4ff" strokeWidth="1.100" />
        <circle cx="757.500" cy="444" r="67" fill="none" stroke="#fff" strokeWidth="1" />
        <path d="M703 498l35-19" stroke="#15151f" strokeWidth="1.300" />
        <path d="M758 444v-81" stroke="#333" strokeWidth="1.200" />
        <path d="M706 409v8l52 27 59-25 3-8" fill="none" stroke="#c9343a" strokeWidth="1.200" />
        <Letter x={755} y={360} c="#8c8c8c">z</Letter>
        <ellipse cx="968" cy="402.500" rx="28" ry="15.500" fill="#454648" stroke="#8a8c90" strokeWidth="5" />
        <path d="M968 372l18 8-18 8-18-8z" fill="#a6a8ab" />
        <path d="M950 380l18 8v21l-17-9z" fill="#94969a" />
        <path d="M986 380l-18 8v21l17-9z" fill="#85878b" />
        <path d="M567 551v-22" stroke="#22229a" strokeWidth="1.500" />
        <path d="M567 551l16-9 3-3" stroke="#9a2c22" strokeWidth="2.500" fill="none" />
        <path d="M564 550l-8-5-3-4" stroke="#215c2a" strokeWidth="1.500" fill="none" />
        <Letter x={565} y={531} c="#3030b0">z</Letter>
      </Viewport>
    </div>
  );
}

function Timeline() {
  const frames = Array.from({ length: 101 }, (_, i) => i);
  const at = (f: number) => 15 + f * 8.590;
  return (
    <div className="shrink-0 text-[10px] text-[#d0d0d0]">
      <div className="flex h-4 items-stretch bg-[#444] pl-0.5 leading-[15px]">
        <button type="button" aria-label="上一帧" className="w-3 border-b border-r border-[#1c1c1c]">&lt;</button>
        <button type="button" className="w-[108px] border-b-2 border-r-2 border-[#161616]">0 / 100</button>
        <button type="button" aria-label="下一帧" className="w-3.5 border-b border-r border-[#1c1c1c]">&gt;</button>
      </div>
      <div className="flex h-[25px] border-t border-[#1c1c1c] bg-[#444]">
        <button type="button" aria-label="打开迷你曲线编辑器" className="flex w-[33px] shrink-0 items-center justify-center pl-1.5">
          <svg viewBox="0 0 16 16" className="h-4 w-4" aria-hidden="true">
            <path d="M1 1.500h14v4H1zM3 3.500l3 1 4-1 3 1M1 14.500h5M10 14.500h5M1 12.500h5M10 12.500h5M4.500 7.500v4M11.500 7.500v4M3 9.500l1.500-2 1.500 2M10 9.500l1.500-2 1.500 2" fill="none" stroke="#ccc" />
          </svg>
        </button>
        <svg className="h-6 min-w-0 flex-1 bg-[#2a2a2a]" aria-label="时间轴">
          <path d={frames.map((f) => `M${at(f).toFixed(1)} 1v${f % 5 ? 9 : 12}`).join("")} stroke="#7a7a7a" />
          <rect x="12" y="2" width="6" height="19" fill="#a98b22" />
          {frames.filter((f) => f % 5 === 0 && f < 80).map((f) => (
            <text key={f} x={at(f)} y="20" textAnchor="middle" fontSize="10" fill={f ? "#cfcfcf" : "#f0d860"} fontFamily="Noto Sans">{f}</text>
          ))}
        </svg>
      </div>
    </div>
  );
}

function Rollout({ title, closed, children }: { title: string; closed?: boolean; children?: React.ReactNode }) {
  return (
    <section className={`mb-2 border-l border-[#232323] pl-0.5 ${closed ? "" : "border-b pb-0.5"}`}>
      <button type="button" className="flex h-[13px] w-full items-center border border-[#5c5c5c] bg-[#494949] text-[10px] leading-3 text-[#e6e6e6]">
        <span className="w-2 text-center font-bold">{closed ? "+" : "-"}</span>
        <span className="flex-1 pr-3 text-center">{title}</span>
      </button>
      {children}
    </section>
  );
}

function CommandPanel() {
  const prims = ["长方体", "圆锥体", "球体", "几何球体", "圆柱体", "管状体", "圆环", "四棱锥", "茶壶", "平面"];
  return (
    <aside className="w-[142px] shrink-0 overflow-hidden border-l-2 border-[#2a2a2a] bg-[#444] text-[10px] text-[#dedede]">
      <div className="flex w-[146px] flex-col pt-1">
        <div className="flex h-[23px] gap-0.5 bg-[#333]">
          {["create", "modify", "hierarchy", "motion", "display", "utilities"].map((n, i) => (
            <button key={n} type="button" aria-label={n} className={`flex w-[23px] shrink-0 items-center justify-center rounded-t-sm border-x border-t ${i ? "border-[#111] bg-[#383838]" : "border-[#555] bg-[#444]"}`}>
              <Icon name={n} className="h-5 w-5" />
            </button>
          ))}
        </div>
        <div className="flex h-8 items-center pl-[7px]">
          {["geometry", "shapes", "lights", "cameras", "helpers", "waves", "systems"].map((n, i) => (
            <button key={n} type="button" aria-label={n} className={`flex h-5 w-5 shrink-0 items-center justify-center ${i ? "" : "border border-[#6f9fd8] bg-[#3b78c4]"}`}>
              <Icon name={n} className="h-[18px] w-[18px]" />
            </button>
          ))}
        </div>
        <div className="border-b border-[#262626] pb-1.5 pl-[7px]">
          <label className="flex h-[17px] items-center border border-[#222] bg-[#ececec] text-[#111]">
            <select aria-label="几何体类型" className="min-w-0 flex-1 appearance-none bg-transparent pl-0.5">
              <option>标准基本体</option>
            </select>
            <Chevron color="#555" />
          </label>
        </div>
        <div className="flex flex-col pl-1 pt-[3px]">
          <Rollout title="对象类型">
            <label className="flex h-[18px] items-center gap-1.5 pl-[27px] pt-0.5 leading-4">
              <input type="checkbox" className="h-2.5 w-2.5 appearance-none border border-[#222] bg-[#555]" />
              自动栅格
            </label>
            <div className="grid grid-cols-2 gap-x-1 gap-y-1 pt-px">
              {prims.map((p) => (
                <button key={p} type="button" className={`h-[14px] whitespace-nowrap border-b border-r leading-3 ${p === "球体" ? "border-[#173f75] bg-[#3480dc] text-[#bcd8fa]" : "border-[#1e1e1e] bg-[#484848]"}`}>{p}</button>
              ))}
            </div>
          </Rollout>
          <Rollout title="名称和颜色">
            <div className="flex h-[26px] items-end gap-1 pb-0.5 pl-1">
              <input aria-label="名称" defaultValue="Sphere001" className="h-4 w-[113px] shrink-0 border border-[#222] bg-[#585858] px-px text-[10px] text-[#dedede]" />
              <button type="button" aria-label="颜色" className="h-4 w-5 shrink-0 border border-[#ddd] bg-[#9c9cf2]" />
            </div>
          </Rollout>
          <Rollout title="创建方法">
            <div className="flex h-[22px] items-end pb-px leading-4">
              {["边", "中心"].map((t, i) => (
                <label key={t} className="flex w-[67px] items-center gap-1.5 pl-3">
                  <input type="radio" name="method" defaultChecked={i === 1} className="h-2 w-2 appearance-none rounded-full border border-[#1c1c1c] bg-[#3c3c3c] checked:bg-[#eee]" />
                  {t}
                </label>
              ))}
            </div>
          </Rollout>
          <Rollout title="键盘输入" closed />
        </div>
        <div className="mt-1.5 border-t border-[#666]" />
      </div>
    </aside>
  );
}

function Watermark() {
  const outline = "[-webkit-text-stroke:4px_#262626] [paint-order:stroke_fill]";
  return (
    <div className={`pointer-events-none absolute left-[42px] top-9 flex items-center font-bold italic leading-10 text-white ${outline}`}>
      <span className="text-[30px]">秒</span>
      <span className="text-[34px] font-medium">d</span>
      <svg viewBox="0 0 20 34" className="h-[34px] w-5 shrink-0" aria-hidden="true">
        <path d="M5 2l5 5 6-6-1 6-5 3-4-3z" fill="#f7cf3a" stroke="#262626" strokeWidth=".7" />
        <circle cx="10" cy="21" r="9.500" fill="#2d86e6" />
        <path d="M7.500 16l8 5-8 5z" fill="#fff" />
      </svg>
      <span className="text-[34px] font-medium">ng</span>
      <span className="text-[30px]">视频</span>
    </div>
  );
}

function SiteBadge() {
  return (
    <div className="absolute bottom-0 right-2.5 flex h-[190px] w-[379px] items-center bg-white pl-[34px] text-[#0a0a0a]">
      <svg viewBox="105 425 305 255" className="h-[85px] w-[101px] shrink-0" aria-hidden="true">
        <defs>
          <linearGradient id="tower" x1="0" y1="0" x2="0" y2="1">
            <stop offset="0" stopColor="#173f96" />
            <stop offset="1" stopColor="#2f6cb6" />
          </linearGradient>
        </defs>
        <path d="M128 538c20-62 98-105 178-107 74 0 112 38 98 92l-16 12c12-50-24-83-86-83-76 0-134 32-174 86z" fill="#94c223" />
        <path d="M252 468l60 26v28l-32 14v82l-30 8zM334 516l42 26-12 26-30 22z" fill="#dcdcdc" />
        <path d="M196 490l54-22v158l-54 1z" fill="url(#tower)" />
        <path d="M128 572l44-22v70c-20-8-38-24-44-48zM280 540l46-20v82l-46 16z" fill="#1d469c" />
        <path d="M119 553c-22 50-8 105 65 120 98 8 196-50 225-143-48 72-110 108-190 111-72 1-104-32-100-88z" fill="#1b449b" />
      </svg>
      <div className="flex flex-col whitespace-nowrap pt-2 italic">
        <span className="text-[41px] font-black leading-10">土木工程网</span>
        <span className="font-['Noto_Sans',sans-serif] text-[27px] font-medium leading-6">www.civilcn.com</span>
      </div>
    </div>
  );
}

export default function App() {
  return (
    <div className={`relative flex h-screen w-full flex-col overflow-hidden bg-[#3a3a3a] ${UI}`}>
      <TitleAndMenu />
      <Toolbar />
      <Ribbon />
      <main className="flex min-h-0 flex-1">
        <LeftTools />
        <LayoutStrip />
        <div className="flex min-w-0 flex-1 flex-col bg-[#474747] pt-[3px]">
          <Viewports />
          <Timeline />
        </div>
        <CommandPanel />
      </main>
      <footer className="flex h-1 shrink-0 bg-[#333]">
        <div className="w-[81px] border-r-2 border-white bg-[#dcc8c8]" />
        <div className="ml-1 flex-1 border-t border-[#111]" />
      </footer>
      <Watermark />
      <SiteBadge />
    </div>
  );
}
